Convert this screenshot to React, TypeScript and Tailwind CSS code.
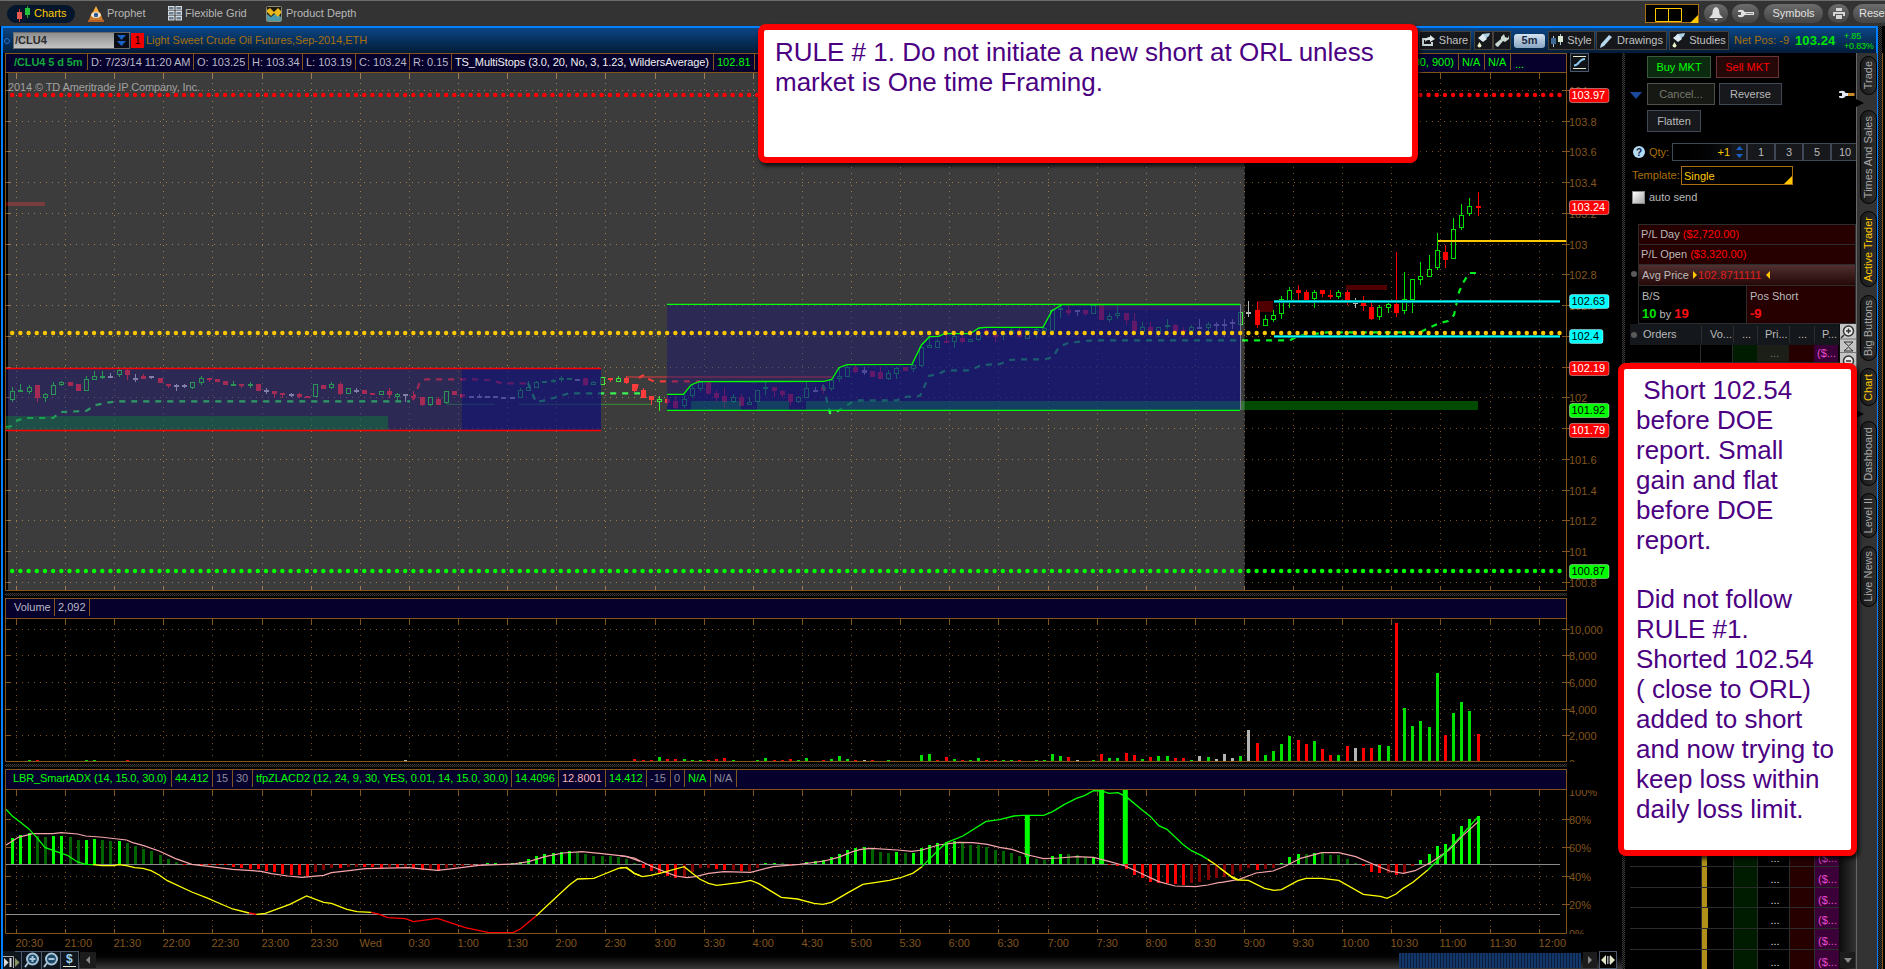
import type { ReactNode } from 'react';

type Seg = 'left' | 'mid' | 'right';

const BAR_STEP = 8.187;
const barX = (i: number) => 12.2 + BAR_STEP * i;
const gridX = Array.from({ length: 32 }, (_, k) => Math.floor(16.5 + k * 49.12) + 0.5);
const priceY = (p: number) => 90.5 + (104 - p) * 153.7;

// color, high, body top, body bottom, low
const CANDLES = `G387,391,400,402 G384,390,391,392 G385,387,392,394 R385,385,398,402 G393,394,398,402 G382,385,395,395
G381,382,385,386 R382,382,386,386 R384,384,391,391 G376,379,391,391 G371,376,380,380 G371,376,378,379 W373,376,378,378
G369,370,375,377 R369,370,375,380 W374,378,380,382 R374,376,379,379 W376,376,378,379 R378,378,383,383 R384,384,386,388
W384,385,387,391 W384,385,387,388 G382,382,388,389 G376,378,383,385 R378,378,380,382 R379,379,382,382 R381,381,385,385
G381,384,386,386 R384,384,386,388 G382,384,386,388 R384,384,391,391 W388,390,392,394 R391,391,394,398 R393,393,395,398
W393,394,396,397 R393,394,397,398 R396,396,398,398 G384,384,397,397 R385,385,389,389 G382,384,388,389 R382,384,394,395
G388,388,394,394 W388,390,392,393 R390,390,394,394 R393,393,395,395 G391,391,395,395 R388,391,395,398 G393,394,397,402
W394,394,396,402 R391,396,398,400 R397,397,405,406 G397,397,405,406 R397,399,405,405 G391,391,403,404 R391,391,395,395
R394,394,397,398 W396,396,398,398 W394,396,398,398 W396,396,398,398 W396,396,398,398 W397,397,399,399 W397,397,399,399
G388,390,398,398 G381,387,391,391 G381,382,388,388 G381,381,383,383 G379,380,382,383 G376,378,380,382 G378,378,380,380
W379,379,381,381 R378,378,385,386 G381,382,385,385 G377,377,385,385 R378,378,380,382 G376,378,382,382 R376,378,383,384
R384,384,391,392 R388,390,398,398 R396,396,400,405 G396,399,402,411 R395,399,403,406 R396,401,408,409 G395,399,406,408
G384,388,396,398 G381,382,389,391 R382,382,394,394 R390,393,398,402 R388,396,402,408 G394,397,402,403 R394,397,406,406
G397,402,405,405 G390,390,402,402 G382,387,389,395 R387,387,391,397 R390,391,395,398 R394,394,402,406 G396,397,402,403
G381,388,398,398 W387,390,392,392 R384,387,391,394 G379,380,389,391 G367,376,379,382 G365,367,377,377 R365,367,372,373
W367,370,373,375 R371,371,377,377 R367,372,379,379 G370,373,379,380 G367,368,374,379 R367,367,371,371 G364,365,369,372
G347,347,366,367 G337,345,348,348 G339,341,348,348 R334,341,343,343 G335,336,342,348 R334,338,342,343 G339,339,342,342
G332,333,340,341 R327,330,334,336 R330,334,337,342 G331,333,335,340 G328,330,334,335 R328,330,337,337 G330,330,339,339
G328,329,332,338 G327,328,331,331 G309,310,331,332 G305,308,310,318 R305,310,313,316 W310,310,312,316 R310,310,314,316
G305,305,314,314 R305,305,320,320 G313,316,320,322 G305,313,316,319 R313,313,320,325 R313,321,331,332 G322,327,332,335
R322,327,332,335 G327,327,332,337 G319,325,327,329 R324,325,332,332 R327,330,332,337 G325,327,331,332 W319,327,328,329
G322,324,328,332 W322,324,326,331 W319,324,326,337 W319,322,324,329 G312,312,325,329 W301,312,314,317 R302,310,325,328
G315,319,326,326 G310,315,320,322 G296,299,314,319 G287,290,302,308 R285,290,293,300 R290,292,300,300 G290,292,299,308
R290,290,294,297 R290,295,297,299 G290,292,297,299 R290,292,303,305 W298,302,304,308 R296,302,306,311 R302,307,319,320
G305,307,317,320 G302,304,308,313 R252,304,313,317 G272,299,311,314 G279,279,300,313 G262,276,280,285 G255,269,277,277
G233,250,268,270 R245,252,260,268 G218,229,259,259 G204,215,228,230 G198,206,214,216 R192,206,208,216`
  .split(/\s+/)
  .map((c) => ({ kind: c[0], v: c.slice(1).split(',').map(Number) }));

// bar index, color, height
const VOLUME = `2G1 3R1 9G1 10G1 14R1 48W1 76R2 77R1 78R1 79G4 80R2 81R2 82G2 83G1 84G1 85R1 86R2 87R3 88G1 91G1 92G3 93R1
94R1 95R2 96G1 97G3 99R1 100G2 101G5 102G2 103R1 104W1 105R1 107G1 111G6 112G7 113R1 114R4 115G2 116R1 117G1 118G3
119R1 120R1 121G1 122G1 123R1 125G1 126G1 127G7 128G5 129R4 130W1 132G1 133R7 134G3 135G3 136R8 137R6 138G2 139R4
140G5 141G5 142R3 143R3 144G1 145W5 146G4 147W2 148W7 149W3 150G5 151W31 152R18 153G6 154G10 155G17 156G25 157R21
158R17 159G20 160R12 161R6 162G6 163R15 164W13 165R13 166R13 167G16 168G15 169R138 170G53 171G35 172G40 173G34
174G88 175R26 176G48 177G59 178G50 179R27`
  .split(/\s+/)
  .map((s) => s.match(/(\d+)([GRW])(\d+)/)!.slice(1))
  .map(([i, c, h]) => ({ i: +i, c, h: +h }));

// B/G bright and dark green above the zero line, R/D bright and dark red below
const HISTOGRAM = `0B26 1B29 2B31 3G28 4G27 5B28 6B28 7G27 8G24 9B24 10B25 11G24 12G23 13B23 14G21 15G18 16G15 17G13 18G9
19G5 20G2 21R1 22D1 23R1 24R1 25R1 26R1 27R3 28R4 29R5 30R5 31R7 32R8 33R10 34R11 35R11 36R12 37D8 38D6 39D4 40R4
41D3 42D3 43R3 44R3 45R4 46D3 47R4 48D3 49R4 50R6 51D5 52R7 53D4 54D3 55D2 56D2 57D1 58B1 59B1 61B1 62B2 63B5 64B8
65B10 66B11 67B12 68B13 69G12 70G10 71G8 72G8 73G8 74G7 75G5 76G1 77R4 78R7 79R10 80R12 81R14 82D13 83D8 84D4 85D4
86R5 87R6 88D6 89R7 90D7 91D4 92B1 93B1 94G1 95R1 96R1 97B2 98B3 99B4 100B7 101B10 102B14 103B16 104B17 105G15
106G12 107G11 108B12 109G11 110B11 111B16 112B19 113B21 114B22 115B23 116G21 117G19 118G19 119G17 120G14 121G13
122G11 123G8 124B7 125G5 126G4 127B8 128B10 129G10 130G9 131G7 132B7 133B4 134R1 135R2 136R5 137R11 138R14 139R18
140R19 141R19 142R20 143R21 144D19 145D18 146D16 147D14 148D13 149D11 150D7 151D4 152R6 153D5 154D4 155B1 156B7
157B10 158G10 159B11 160G11 161G9 162G9 163G5 164G1 165R2 166R8 167R9 168D9 169R11 170D9 171D2 172B4 173B10 174B18
175B20 176B30 177B38 178B45 179B48`
  .split(/\s+/)
  .map((s) => s.match(/(\d+)([BGRD])(\d+)/)!.slice(1))
  .map(([i, c, h]) => ({ i: +i, c, h: +h }));

const CANDLE_COLORS: Record<string, string> = { G: '#00e000', R: '#ff0000', W: '#b4b4b4' };
const HIST_COLORS: Record<string, string> = { B: '#00ff00', G: '#006400', R: '#ff0000', D: '#820000' };

const ADX: [Seg, string, string][] = [
  ['left', '#00ff00', '15,748 30,768 50,787 70,806 90,832 110,862 130,871 165,886 190,906 210,913 228,914'],
  ['left', '#ffff00', '228,914 250,917 280,917 290,914 310,917 330,923 350,925 370,932 390,945 410,962 470,996 510,1015 530,1026 570,1047 610,1059'],
  ['left', '#ff0000', '610,1059 628,1063'],
  ['left', '#ffff00', '628,1063 650,1060 710,1033 751,1008 793,1027 812,1030 850,1048 875,1055 910,1057'],
  ['left', '#ff0000', '910,1057 930,1063 950,1073 993,1076 1013,1085 1072,1075 1140,1103 1195,1117 1257,1118 1275,1107 1314,1067'],
  ['left', '#ffff00', '1314,1067 1360,1015 1395,975 1415,957 1455,955 1475,945 1515,925 1535,922 1554,940 1568,947'],
  ['mid', '#ffff00', '0,383 15,383 35,400 55,410 75,406 97,400 157,380 195,417 217,430 237,436 297,427 320,421 340,431 395,472 435,477 475,490 497,493 518,487 560,457 595,433 640,425 660,421 685,414 717,400 740,380'],
  ['mid', '#00ff00', '740,380 780,330 800,308 840,288 897,244 930,239 965,228 985,226 1038,226 1060,215 1088,194 1118,175 1138,167 1160,152 1180,153 1198,160 1220,158 1240,170 1280,211 1300,230 1320,257 1340,268 1380,314 1400,332 1425,347 1440,358'],
  ['mid', '#ffff00', '1440,358 1460,374 1500,413 1515,421'],
  ['right', '#ffff00', '0,925 28,950 45,960 67,961 105,985 127,991 145,989 184,962 203,955 240,955 280,961 338,1003 378,1009 394,1015 415,1002 432,985 455,967 490,930'],
  ['right', '#00ff00', '490,930 530,880 570,825 609,770'],
];

const SIGNAL: [Seg, string][] = [
  ['left', '15,855 45,832 80,821 130,821 150,818 190,822 210,828 245,831 310,840 325,848 350,856 390,873 430,896 470,913 530,922 570,928 640,934 665,941 705,948 740,952 793,946 812,938 855,932 895,926 1000,923 1072,931 1110,926 1173,916 1257,912 1295,905 1335,890 1380,879 1425,875 1475,881 1535,889 1568,904'],
  ['mid', '0,347 35,354 75,378 115,398 137,408 165,413 185,410 217,400 255,395 320,397 375,380 440,373 500,363 535,352 570,335 590,328 615,325 680,330 715,334 740,330 780,315 830,307 865,308 900,313 930,322 960,328 1000,345 1038,356 1075,354 1118,350 1160,352 1198,364 1238,378 1280,402 1320,425 1360,438 1410,440 1440,435 1470,427'],
  ['right', '0,968 45,958 85,939 125,933 155,918 190,895 240,878 280,878 320,890 360,912 400,933 432,940 460,932 500,905 540,870 570,830 609,785'],
];

const SEG_TRANSFORM: Record<Seg, string> = {
  left: 'translate(0 560) scale(0.40816 0.33333)',
  mid: 'translate(620 740) scale(0.40816 0.33333)',
  right: 'translate(1220 560) scale(0.42411 0.33333)',
};

const TIMES = ['20:30', '21:00', '21:30', '22:00', '22:30', '23:00', '23:30', 'Wed', '0:30', '1:00', '1:30', '2:00', '2:30', '3:00', '3:30', '4:00', '4:30', '5:00', '5:30', '6:00', '6:30', '7:00', '7:30', '8:00', '8:30', '9:00', '9:30', '10:00', '10:30', '11:00', '11:30', '12:00'];

const PRICES = ['104', '103.8', '103.6', '103.4', '103.2', '103', '102.8', '102.6', '102.4', '102.2', '102', '101.8', '101.6', '101.4', '101.2', '101', '100.8'];

const TAGS = [
  { label: '103.97', y: 95.5, bg: '#ff0000', fg: '#fff' },
  { label: '103.24', y: 207.5, bg: '#ff0000', fg: '#fff' },
  { label: '102.63', y: 301.5, bg: '#00ffff', fg: '#000' },
  { label: '102.4', y: 336.5, bg: '#00ffff', fg: '#000' },
  { label: '102.19', y: 368.5, bg: '#ff0000', fg: '#fff' },
  { label: '101.92', y: 410.5, bg: '#00ff00', fg: '#000' },
  { label: '101.79', y: 430.5, bg: '#ff0000', fg: '#fff' },
  { label: '100.87', y: 571.5, bg: '#00ff00', fg: '#000' },
];

function Grid({ top, bottom, rows, ticks }: { top: number; bottom: number; rows: number[]; ticks: 'both' | 'top' }) {
  return (
    <g stroke="#82551d" shapeRendering="crispEdges">
      {gridX.map((x) => (
        <g key={x}>
          <line x1={x} x2={x} y1={top + 10} y2={bottom - 4} strokeDasharray="1 5" />
          <line x1={x} x2={x} y1={top} y2={top + 6} />
          {ticks === 'both' && <line x1={x} x2={x} y1={bottom - 4} y2={bottom} />}
        </g>
      ))}
      {rows.map((v) => {
        const y = Math.floor(v) + 0.5;
        return (
          <g key={v}>
            <line x1={10} x2={1556} y1={y} y2={y} strokeDasharray="1 5" />
            <line x1={6} x2={11} y1={y} y2={y} />
            <line x1={1562} x2={1570} y1={y} y2={y} />
          </g>
        );
      })}
    </g>
  );
}

function AxisText({ y, children }: { y: number; children: ReactNode }) {
  return (
    <text x={1569} y={y + 4.5} fill="#82551d">
      {children}
    </text>
  );
}

function DotLine({ y, color }: { y: number; color: string }) {
  return (
    <g fill={color}>
      {Array.from({ length: 190 }, (_, i) => (
        <circle key={i} cx={barX(i)} cy={y} r={2.2} />
      ))}
    </g>
  );
}

function PricePlot() {
  const stop = { fill: 'none', strokeWidth: 2.2, strokeDasharray: '6 6' };
  return (
    <svg width="1619" height="518" viewBox="3 73 1619 518" className="block shrink-0 text-[11px]">
      <Grid top={73} bottom={590} rows={PRICES.map((p) => priceY(+p))} ticks="both" />

      <rect x="6" y="202" width="39" height="4" fill="#500000" />
      <rect x="626" y="376" width="206" height="2" fill="#700000" />
      <rect x="1101" y="305" width="139" height="5" fill="#500000" />
      <rect x="1257" y="301" width="16" height="11" fill="#500000" />
      <rect x="1346" y="285" width="41" height="5" fill="#500000" />
      <path d="M447 404.3H495M519 404.3H651" stroke="#007000" />
      <rect x="1240" y="401" width="238" height="9" fill="#004b00" />

      {CANDLES.map(({ kind, v }, i) => {
        const x = Math.round(barX(i));
        const color = CANDLE_COLORS[kind];
        const [high, top, bottom, low] = v;
        return (
          <g key={i}>
            <path d={`M${x + 0.5} ${high}V${top}M${x + 0.5} ${bottom}V${low}`} stroke={color} />
            {kind === 'G' && bottom - top > 2 ? (
              <rect x={x - 1.5} y={top + 0.5} width={4} height={bottom - top - 1} fill="none" stroke={color} />
            ) : (
              <rect x={x - 2} y={top} width={5} height={Math.max(2, bottom - top)} fill={color} />
            )}
          </g>
        );
      })}

      <g {...stop} stroke="#00f020">
        <path d="M6 427L12 426L18 420L28 418H53L61 412L86 411L96 405L108 402.5L118 401.3H410" />
        <path d="M528 383L536 402L547 400L569 393.3H640" />
        <path d="M823 385L830 413L836 412L846 406L855 400.3H897L904 397L920 396L925 385L929 376L938 374L946 370.3H970L982 365L1000 364L1010 360L1018 359.3H1045L1053 357L1059 347L1068 343L1085 341L1095 340.3H1290L1298 336L1327 332.3H1420L1433 326L1440 323L1448 321L1454 315L1459 292L1463 283L1469 273H1478" />
      </g>
      <path {...stop} stroke="#f00000" d="M413 400L420 382L426 379.3H473L490 380L502 383.3H528M636 390L640 377L644 375L648 379L654 381.3H700" />

      <rect x="8" y="73" width="1236.6" height="517" fill="#fff" opacity="0.235" />

      <rect x="6" y="368" width="595" height="62" fill="#120c7e" opacity="0.38" />
      <rect x="462" y="368" width="139" height="62" fill="#040484" opacity="0.4" />
      <rect x="6" y="416" width="382" height="14" fill="#00aa28" opacity="0.3" />
      <path d="M6 368.4H601M6 430.4H601" stroke="#ff0000" strokeWidth="1.5" />

      <rect x="667" y="304" width="573" height="106" fill="#120c7e" opacity="0.38" />
      <path d="M667 394.3H683.5L691 385L699 381.7L824 381.3L832 379.3L839 367.7L847 364.7L912 364.3L921.5 345L929.5 336.7L938.5 336.3L944.5 333.7H970L979 328L986 327.3H1043L1052 310.7L1062 304.7H1240V410H667Z" fill="#040484" opacity="0.42" />
      <path d="M667 394.3H683.5L691 385L699 381.7L824 381.3L832 379.3L839 367.7L847 364.7L912 364.3L921.5 345L929.5 336.7L938.5 336.3L944.5 333.7H970L979 328L986 327.3H1043L1052 310.7L1062 304.7H1240" fill="none" stroke="#00ff00" strokeWidth="1.3" />
      <path d="M691 401H741V410H691ZM757 401H789V410H757ZM806 401H1240V410H806Z" fill="#00aa50" opacity="0.25" />
      <path d="M667 304.4H1240M667 410.4H1240" stroke="#00ff00" strokeWidth="1.2" />
      <path d="M1240.5 304V410" stroke="#7b7b9b" />

      <DotLine y={95} color="#ff0000" />
      <path d="M1274 301.4H1560M1274 336.4H1560" stroke="#008b90" strokeWidth="3" />
      <path d="M1274 301.4H1560M1274 336.4H1560" stroke="#00ffff" strokeWidth="1.3" />
      <DotLine y={333} color="#ffc800" />
      <path d="M1438 241H1566" stroke="#ffc800" strokeWidth="2" />
      <DotLine y={571} color="#00ff00" />

      <path d="M5.5 73V590.5H1566.5V73" fill="none" stroke="#82551d" />
      <text x="8" y="90.500" fill="#a0a0a0" textLength="192">2014 © TD Ameritrade IP Company, Inc.</text>
      {PRICES.map((p) => (
        <AxisText key={p} y={priceY(+p)}>{p}</AxisText>
      ))}
      {TAGS.map((t) => (
        <g key={t.label}>
          <rect x="1569.5" y={t.y - 7} width={t.label.length > 5 ? 39.5 : 33.5} height="14" rx="2.5" fill={t.bg} stroke="#fff" strokeOpacity="0.4" />
          <text x="1571.5" y={t.y + 3.5} fill={t.fg}>{t.label}</text>
        </g>
      ))}
    </svg>
  );
}

function VolumePlot() {
  const rows = [629.5, 655.5, 682.5, 709.5, 735.5];
  return (
    <svg width="1619" height="143" viewBox="3 619 1619 143" className="block shrink-0 text-[11px]">
      <Grid top={619} bottom={761} rows={rows} ticks="top" />
      {VOLUME.map(({ i, c, h }) => (
        <rect key={i} x={Math.round(barX(i)) - 1} y={761 - h} width="3" height={h} fill={CANDLE_COLORS[c]} />
      ))}
      <path d="M5.5 619V761.5H1566.5V619" fill="none" stroke="#82551d" />
      {['10,000', '8,000', '6,000', '4,000', '2,000'].map((label, k) => (
        <AxisText key={label} y={rows[k]}>{label}</AxisText>
      ))}
      <AxisText y={763}>0</AxisText>
    </svg>
  );
}

function IndicatorPlot() {
  const rows = [819.5, 847.5, 876.5, 904.5];
  return (
    <svg width="1619" height="144" viewBox="3 790 1619 144" className="block shrink-0 text-[11px]">
      <Grid top={790} bottom={933} rows={rows} ticks="both" />
      <path d="M6 864.5H1560M6 914.5H1560" stroke="#8c8c8c" />
      {HISTOGRAM.map(({ i, c, h }) => (
        <rect key={i} x={Math.round(barX(i)) - 1} y={c === 'B' || c === 'G' ? 864 - h : 864} width="3" height={h} fill={HIST_COLORS[c]} />
      ))}
      <path d="M1027.3 815V857M1101.6 790V864M1125.3 790V864" stroke="#00ff00" strokeWidth="5" />
      {SIGNAL.map(([seg, points]) => (
        <g key={seg} transform={SEG_TRANSFORM[seg]}>
          <polyline points={points} fill="none" stroke="#f5a5aa" strokeWidth="1.2" vectorEffect="non-scaling-stroke" />
        </g>
      ))}
      {ADX.map(([seg, color, points]) => (
        <g key={points} transform={SEG_TRANSFORM[seg]}>
          <polyline points={points} fill="none" stroke={color} strokeWidth="1.3" vectorEffect="non-scaling-stroke" />
        </g>
      ))}
      <path d="M5.5 790V933.5H1566.5V790" fill="none" stroke="#82551d" />
      <AxisText y={791.5}>100%</AxisText>
      {['80%', '60%', '40%', '20%'].map((label, k) => (
        <AxisText key={label} y={rows[k]}>{label}</AxisText>
      ))}
      <AxisText y={933.5}>0%</AxisText>
    </svg>
  );
}

function Cell({ w, color = 'text-[#b9b9c4]', children }: { w: string; color?: string; children: ReactNode }) {
  return (
    <div className={`flex shrink-0 items-center overflow-hidden whitespace-nowrap border-r border-[#82551d] pl-[3px] ${w} ${color}`}>
      {children}
    </div>
  );
}

function PaneHeader({ children, h = 'h-[21px] pb-[2px]' }: { children: ReactNode; h?: string }) {
  return (
    <div className={`ml-[2px] flex w-[1562px] shrink-0 border border-[#82551d] bg-[#06002d] ${h}`}>{children}</div>
  );
}

const HATCH = 'bg-[repeating-conic-gradient(#3a3a3a_0_25%,#0a0a0a_0_50%)] bg-[length:2px_2px]';

function Wrench({ className }: { className?: string }) {
  return (
    <svg width="16" height="9" viewBox="0 0 16 9" className={className}>
      <path d="M0 1.500C3 0 6 1 6.500 3H9v3H6.500C6 8 3 9 0 7.500V6h3V3H0Z" fill="#dfe6f2" />
      <path d="M9 3h6.5v3H9Z" fill="#c98a2c" />
    </svg>
  );
}

function TopBar() {
  return (
    <div className="flex h-[26px] shrink-0 items-center border-t border-[#6b6e6e] bg-[#333] text-[11px] text-[#b8b8b8]">
      <div className="ml-[7px] flex h-[18px] w-[68px] items-center rounded-full bg-[#04162c] text-[#ffc800]">
        <svg width="16" height="16" viewBox="0 0 16 16" className="ml-[9px]">
          <path d="M3.5 3v13" stroke="#c33" />
          <path d="M1 6h5v7H1Z" fill="#e45a50" />
          <path d="M11.5 0v12" stroke="#2a2" />
          <path d="M9 2h5v7H9Z" fill="#23c33c" />
        </svg>
        <span className="ml-[2px]">Charts</span>
      </div>
      <svg width="16" height="16" viewBox="0 0 16 16" className="ml-[13px]">
        <path d="M8 0l3 6H5Z" fill="#ffb13c" />
        <path d="M4 6h8l3 8H1Z" fill="#c97a26" />
        <ellipse cx="8" cy="9" rx="5" ry="3" fill="#f2ead8" />
        <circle cx="8" cy="9" r="2.2" fill="#2d5a94" />
        <path d="M0 14h16v2H0Z" fill="#b5602a" />
      </svg>
      <span className="ml-[3px] w-[61px]">Prophet</span>
      <svg width="14" height="15" viewBox="0 0 14 15">
        {[0.5, 5.5, 10.5].map((y) => (
          <g key={y} fill="#6b7d8c" stroke="#d5dde2">
            <rect x="0.5" y={y} width="5.5" height="3.5" />
            <rect x="8" y={y} width="5.5" height="3.5" />
          </g>
        ))}
      </svg>
      <span className="ml-[3px] w-[81px]">Flexible Grid</span>
      <svg width="16" height="16" viewBox="0 0 16 16">
        <rect x="0.5" y="0.5" width="15" height="15" rx="1" fill="#1d1a10" stroke="#8c8c78" />
        <path d="M1 8l4 3 5-4 5 4v4H1Z" fill="#4c99a8" />
        <path d="M1 4l3-2 4 4 4-4 3 3v2l-3 4-4-4-3 3-4-4Z" fill="#e8b81e" />
      </svg>
      <span className="ml-[4px]">Product Depth</span>

      <div className="ml-auto flex items-center text-[#e0e0e0]">
        <svg width="54" height="20" viewBox="0 0 54 20">
          <rect x="0.5" y="0.5" width="53" height="18" fill="#000" stroke="#a87010" />
          <path d="M10.500 4.500h26v13h-26ZM23.500 4.500v13" fill="none" stroke="#ffc800" />
          <path d="M53 11v8h-8Z" fill="#ffc800" />
        </svg>
        <div className="ml-[5px] flex h-[19px] w-[24px] items-center justify-center rounded-full bg-gradient-to-b from-[#6c6c6c] to-[#444]">
          <svg width="14" height="14" viewBox="0 0 14 14">
            <path d="M7 0c3 1 3.500 4 3.500 7L14 11H0l3.500-4C3.500 4 4 1 7 0ZM5 12h4l-2 2Z" fill="#e0e0e0" />
          </svg>
        </div>
        <div className="ml-[4px] flex h-[19px] w-[27px] items-center justify-center rounded-full bg-gradient-to-b from-[#6c6c6c] to-[#444]">
          <svg width="16" height="9" viewBox="0 0 16 9">
            <path d="M0 1.500C3 0 6 1 6.500 3H16v3H6.500C6 8 3 9 0 7.500V6h3V3H0Z" fill="#e0e0e0" />
            <path d="M8 4.500h7" stroke="#888" />
          </svg>
        </div>
        <div className="ml-[5px] flex h-[19px] w-[59px] items-center justify-center rounded-full bg-gradient-to-b from-[#6c6c6c] to-[#444]">Symbols</div>
        <div className="ml-[5px] flex h-[19px] w-[21px] items-center justify-center rounded-full bg-gradient-to-b from-[#6c6c6c] to-[#444]">
          <svg width="12" height="11" viewBox="0 0 12 11">
            <path d="M3 0h6v3H3ZM0 4h12v4h-2V6H2v2H0ZM3 7h6v4H3Z" fill="#d5d5d5" />
          </svg>
        </div>
        <div className="ml-[4px] flex h-[19px] w-[32px] items-center overflow-hidden rounded-l-full bg-gradient-to-b from-[#6c6c6c] to-[#444] pl-[6px]">Reset</div>
      </div>
    </div>
  );
}

function ToolButton({ w, children }: { w: string; children: ReactNode }) {
  return (
    <div className={`flex h-[19px] shrink-0 items-center justify-center gap-[4px] border border-[#45413a] bg-[#15171a] text-[11px] text-[#c0c0c0] ${w}`}>
      {children}
    </div>
  );
}

function Flask() {
  return (
    <svg width="13" height="15" viewBox="0 0 13 15" className="shrink-0">
      <path d="M5 1l8-1-1 3-5 4-3-3Z" fill="#a9cfe2" />
      <path d="M1 5l5-4 4 5-4 3Z" fill="#dceaf2" />
      <path d="M2.500 9l2 3.500a2 2 0 1 1-4 0Z" fill="#e8f0c8" />
    </svg>
  );
}

function SymbolBar() {
  return (
    <div className="flex h-[25px] shrink-0 items-center bg-gradient-to-b from-[#0c4685] to-[#031c38]">
      <div className="ml-[1px] h-[6px] w-[6px] rounded-full border border-[#1f6fd0]" />
      <div className="ml-[3px] flex h-[17px] w-[117px] items-center border border-[#6a6a6a] bg-gradient-to-b from-[#8d8d8d] to-[#c4c4c4] pl-[1px] text-[11px] font-bold text-[#2b2b2b]">
        /CLU4
        <div className="ml-auto flex h-full w-[15px] items-center justify-center bg-[#0a0d14]">
          <svg width="9" height="11" viewBox="0 0 9 11">
            <path d="M0 0h9L4.500 5ZM0 6h9l-4.500 5Z" fill="#1c62c4" />
          </svg>
        </div>
      </div>
      <div className="ml-[1px] flex h-[15px] w-[13px] items-center justify-center bg-[#f00000] text-[11px] text-black">1</div>
      <span className="ml-[2px] w-[218px] whitespace-nowrap text-[11px] tracking-[-0.050px] text-[#a8700c]">Light Sweet Crude Oil Futures,Sep-2014,ETH</span>

      <div className="ml-auto flex items-center">
        <ToolButton w="w-[52px]">
          <svg width="13" height="11" viewBox="0 0 13 11">
            <path d="M0 3h5v2H2v4h7V7h2v4H0Z" fill="#c9d6d6" />
            <path d="M3 7c0-4 3-5 5-5V0l5 4-5 3V5C6 5 4 5 3 7Z" fill="#dfe8e8" />
          </svg>
          Share
        </ToolButton>
        <div className="w-[3px]" />
        <ToolButton w="w-[19px]"><Flask /></ToolButton>
        <ToolButton w="w-[18px]">
          <svg width="14" height="14" viewBox="0 0 14 14">
            <path d="M9 0l1 3 3 1 1-3v4l-4 3-2-1-5 6-2-1-1-2 6-5V3Z" fill="#c8d8d0" />
          </svg>
        </ToolButton>
        <div className="ml-[3px] flex h-[14px] w-[31px] items-center justify-center rounded-[3px] bg-gradient-to-b from-[#d5e3f0] to-[#88a5c4] text-[11px] font-bold text-[#1b2b40]">5m</div>
        <div className="w-[3px]" />
        <ToolButton w="w-[47px]">
          <svg width="12" height="13" viewBox="0 0 12 13" className="shrink-0">
            <path d="M2.500 2v11M9.500 0v11" stroke="#b8c8d8" />
            <path d="M0 4h5v6H0Z" fill="#3c6a94" />
            <path d="M7 2h5v6H7Z" fill="#d8e8d0" />
          </svg>
          Style
        </ToolButton>
        <div className="w-[1px]" />
        <ToolButton w="w-[71px]">
          <svg width="13" height="14" viewBox="0 0 13 14">
            <path d="M0 14l1-4 8-9 3 2-8 9Z" fill="#b8d8ee" />
          </svg>
          Drawings
        </ToolButton>
        <div className="w-[2px]" />
        <ToolButton w="w-[60px]"><Flask />Studies</ToolButton>
        <span className="ml-[5px] w-[61px] whitespace-nowrap text-[11px] text-[#a8700c]">Net Pos: -9</span>
        <span className="w-[49px] text-[13px] font-bold tracking-[0.100px] text-[#00e400]">103.24</span>
        <div className="w-[32px] whitespace-nowrap text-[9px] leading-[10px] tracking-[-0.200px] text-[#00e400]">
          <div>+.85</div>
          <div>+0.83%</div>
        </div>
      </div>
    </div>
  );
}

function BottomBar() {
  return (
    <div className="flex h-[18px] shrink-0 items-center bg-gradient-to-b from-black to-[#3a3a3a]">
      <svg width="76" height="18" viewBox="3 951 76 18" className="shrink-0">
        <path d="M0 951H79V969H0Z" fill="#10161e" />
        <path d="M21.500 951V969M41.500 951V969M60.500 951V969M78.500 951V969M15 951.500H79" stroke="#4a5a6c" />
        <path d="M3 956.500H13.500V968" fill="none" stroke="#b0b0b0" />
        <path d="M4 958l4.500 4.500L4 967Z" fill="#d8d8d8" />
        <path d="M10.500 958v9" stroke="#d8d8d8" strokeWidth="2" />
        <path d="M15 958l4.500 4.500-4.500 4.500Z" fill="#8a9460" />
        <g stroke="#a8c4d8" strokeWidth="2">
          <circle cx="32.500" cy="959" r="5.500" fill="#1d4a68" />
          <circle cx="51.500" cy="959" r="5.500" fill="#1d4a68" />
          <path d="M28 963l-3 4M47 963l-3 4M29.500 959h6M32.500 956v6M48.500 959h6" />
        </g>
        <text x="66" y="963" fontSize="12" fontWeight="bold" fill="#9fd4f0">$</text>
        <path d="M63 966.500h13" stroke="#e0e8d0" />
      </svg>
      <div className="ml-[1px] flex h-[16px] w-[16px] items-center justify-center bg-[#1c1c1c]">
        <div className="h-0 w-0 border-y-4 border-r-4 border-y-transparent border-r-[#888]" />
      </div>
      <div className="ml-auto h-[15px] w-[182px] bg-[repeating-linear-gradient(90deg,#14376a_0_2px,#0a1d3c_2px_3px)]" />
      <div className="ml-[2px] flex h-[16px] w-[14px] items-center justify-center bg-[#1c1c1c]">
        <div className="h-0 w-0 border-y-4 border-l-4 border-y-transparent border-l-[#888]" />
      </div>
      <div className="ml-[2px] mr-[5px] flex h-[18px] w-[18px] items-center justify-center border border-[#4a5a6c] bg-black">
        <svg width="14" height="10" viewBox="0 0 14 10">
          <path d="M0 5l5-5v10ZM14 5L9 0v10Z" fill="#e4e4c8" />
          <path d="M6.500 1v8M8 1v8" stroke="#aaa" />
        </svg>
      </div>
    </div>
  );
}

function ChartColumn() {
  return (
    <div className="flex w-[1619px] shrink-0 flex-col">
      <div className="flex">
        <PaneHeader h="h-[20px] pb-[2px]">
          <Cell w="w-[82px] pl-[8px] tracking-[-0.100px]" color="text-[#12a83a] font-bold">/CLU4 5 d 5m</Cell>
          <Cell w="w-[106px]">D: 7/23/14 11:20 AM</Cell>
          <Cell w="w-[55px]">O: 103.25</Cell>
          <Cell w="w-[54px]">H: 103.34</Cell>
          <Cell w="w-[53px]">L: 103.19</Cell>
          <Cell w="w-[54px]">C: 103.24</Cell>
          <Cell w="w-[42px]">R: 0.15</Cell>
          <Cell w="w-[262px]" color="text-[#f0f0f0] tracking-[-0.1px]">TS_MultiStops (3.0, 20, No, 3, 1.23, WildersAverage)</Cell>
          <Cell w="w-[41px]" color="text-[#00ff00]">102.81</Cell>
          <Cell w="w-[704px] justify-end pr-[4px]" color="text-[#00ff00]">900, 900)</Cell>
          <Cell w="w-[26px]" color="text-[#00ff00]">N/A</Cell>
          <Cell w="w-[26px]" color="text-[#00ff00]">N/A</Cell>
          <span className="pl-[4px] pt-[2px] text-[#00ff00]">...</span>
        </PaneHeader>
        <svg width="19" height="19" viewBox="0 0 19 19" className="ml-[3px]">
          <rect x="0.5" y="0.5" width="18" height="18" fill="#101418" stroke="#4a5a6c" />
          <path d="M3 3.500h13M3 15.500h13" stroke="#e8e8d0" />
          <path d="M4 12.500c6 0 4-6.500 11-6.500" fill="none" stroke="#8cc8f0" strokeWidth="2" />
        </svg>
      </div>
      <PricePlot />
      <div className={`mb-[2px] ml-[2px] mt-[2px] h-[3px] w-[1562px] shrink-0 ${HATCH}`} />
      <PaneHeader>
        <Cell w="w-[49px] pl-[8px]">Volume</Cell>
        <Cell w="w-[35px]">2,092</Cell>
      </PaneHeader>
      <VolumePlot />
      <div className={`mb-[2px] ml-[2px] mt-[2px] h-[3px] w-[1562px] shrink-0 ${HATCH}`} />
      <PaneHeader>
        <Cell w="w-[166px] pl-[7px] tracking-[-0.120px]" color="text-[#00ff00]">LBR_SmartADX (14, 15.0, 30.0)</Cell>
        <Cell w="w-[41px]" color="text-[#00ff00]">44.412</Cell>
        <Cell w="w-[20px]" color="text-[#8c8c9a]">15</Cell>
        <Cell w="w-[20px]" color="text-[#8c8c9a]">30</Cell>
        <Cell w="w-[259px] pl-[2px] tracking-[-0.050px]" color="text-[#00ff00]">tfpZLACD2 (12, 24, 9, 30, YES, 0.01, 14, 15.0, 30.0)</Cell>
        <Cell w="w-[47px]" color="text-[#00ff00]">14.4096</Cell>
        <Cell w="w-[47px]" color="text-[#f5b5ba]">12.8001</Cell>
        <Cell w="w-[41px]" color="text-[#00ff00]">14.412</Cell>
        <Cell w="w-[24px]" color="text-[#8c8c9a]">-15</Cell>
        <Cell w="w-[14px]" color="text-[#8c8c9a]">0</Cell>
        <Cell w="w-[26px]" color="text-[#00ff00]">N/A</Cell>
        <Cell w="w-[26px]" color="text-[#8c8c9a]">N/A</Cell>
      </PaneHeader>
      <IndicatorPlot />
      <svg width="1619" height="17" viewBox="3 934 1619 17" className="block shrink-0 text-[11px]">
        {TIMES.map((t, k) => (
          <text key={t} x={gridX[k] - 1} y={947} fill="#82551d">{t}</text>
        ))}
      </svg>
      <BottomBar />
    </div>
  );
}

function OrderButton({ className, children }: { className: string; children: ReactNode }) {
  return <div className={`flex h-[22px] items-center justify-center border ${className}`}>{children}</div>;
}

const GREY_BTN = 'border-[#3f4854] bg-[#16181b] text-[#b9b9b9]';

function LadderRow({ wide }: { wide?: boolean }) {
  return (
    <div className="flex h-[20.870px] shrink-0 items-stretch border-b border-[#2c2c2c] pl-[1px]">
      <div className="w-[71px] border-r border-[#2c2c2c]" />
      <div className="w-[32px] border-r border-[#2c2c2c]">
        <div className={`h-full bg-[#b09018] ${wide ? 'w-[6px]' : 'w-[5px]'}`} />
      </div>
      <div className="w-[24px] border-r border-[#2c2c2c] bg-[#001c00]" />
      <div className="w-[32px] border-r border-[#2c2c2c] pl-[3px] pt-[4px] text-center text-[#ddd]">...</div>
      <div className="w-[25px] border-r border-[#2c2c2c] bg-[#260000]" />
      <div className="w-[24px] bg-[#3c0038] pl-[3px] pt-[4px] text-[#e84cd0]">($...</div>
    </div>
  );
}

function OrderPanel() {
  return (
    <div className="flex w-[227px] shrink-0 flex-col overflow-hidden text-[11px] text-[#b9b9b9]">
      <div className="flex h-[88px] shrink-0 pl-[1px] pt-[3px]">
        <svg width="12" height="7" viewBox="0 0 12 7" className="mt-[36px]">
          <path d="M0 0h12L6 7Z" fill="#1b4a9c" />
        </svg>
        <div className="ml-[5px] flex flex-col gap-[5px]">
          <div className="flex gap-[5px]">
            <OrderButton className="w-[64px] border-[#3c5a3c] bg-[#0c2a10] text-[#00ff00]">Buy MKT</OrderButton>
            <OrderButton className="w-[63px] border-[#6a3434] bg-[#260808] text-[#ff0000]">Sell MKT</OrderButton>
          </div>
          <div className="flex gap-[4px]">
            <OrderButton className="w-[68px] border-[#4c5048] bg-[#161814] text-[#77796f]">Cancel...</OrderButton>
            <OrderButton className={`w-[63px] ${GREY_BTN}`}>Reverse</OrderButton>
          </div>
          <OrderButton className={`w-[54px] ${GREY_BTN}`}>Flatten</OrderButton>
        </div>
        <Wrench className="ml-auto mr-[1px] mt-[34px]" />
      </div>
      <div className="mt-[2px] flex h-[18px] shrink-0 items-center pl-[4px]">
        <div className="flex h-[12px] w-[12px] shrink-0 items-center justify-center rounded-full bg-[#b5dcf5] text-[10px] font-bold text-[#124]">?</div>
        <span className="ml-[4px] w-[23px] shrink-0 text-[#a8700c]">Qty:</span>
        <div className="flex h-[18px] w-[75px] shrink-0 items-center justify-end border border-[#3f4854] bg-gradient-to-r from-black to-[#1a1d20] text-[#ffc800]">
          +1
          <svg width="14" height="16" viewBox="0 0 14 16" className="ml-[2px]">
            <path d="M0 0h14v16H0Z" fill="#15181c" />
            <path d="M4 6h7L7.500 2ZM4 10h7l-3.500 4Z" fill="#1c62c4" />
          </svg>
        </div>
        {['1', '3', '5', '10'].map((n) => (
          <div key={n} className={`flex h-[18px] w-[28px] shrink-0 items-center justify-center border ${GREY_BTN}`}>{n}</div>
        ))}
      </div>
      <div className="mt-[5px] flex h-[19px] shrink-0 items-center pl-[3px]">
        <span className="w-[49px] text-[#a8700c]">Template:</span>
        <div className="flex h-[19px] w-[112px] items-center border border-[#a8700c] pl-[2px] pt-px text-[#ffc800]">
          Single
          <svg width="8" height="8" viewBox="0 0 8 8" className="ml-auto self-end">
            <path d="M8 0v8H0Z" fill="#ffc800" />
          </svg>
        </div>
      </div>
      <div className="mt-[6px] flex h-[13px] shrink-0 items-center gap-[4px] pl-[3px]">
        <div className="h-[13px] w-[13px] border border-[#888] bg-gradient-to-br from-white to-[#a8a8a8]" />
        auto send
      </div>
      <div className="relative ml-[9px] mt-[20px] flex h-[100px] shrink-0 flex-col border border-[#2c2c2c]">
        <div className="absolute left-[-8px] top-[46px] h-[6px] w-[6px] rounded-full bg-[#5a5a5a]" />
        <div className="flex h-[20px] items-center border-b border-[#2c2c2c] bg-[#260000] pl-[2px]">P/L Day&nbsp;<span className="text-[#ff0000]">($2,720.00)</span></div>
        <div className="flex h-[20px] items-center border-b border-[#2c2c2c] bg-[#260000] pl-[2px]">P/L Open&nbsp;<span className="text-[#ff0000]">($3,320.00)</span></div>
        <div className="flex h-[20px] items-center bg-gradient-to-b from-[#503030] to-[#260808] pl-[3px]">
          Avg Price
          <div className="ml-[4px] h-0 w-0 border-y-4 border-l-4 border-y-transparent border-l-[#ffc800]" />
          <span className="ml-[1px] tracking-[0.250px] text-[#e02020]">102.8711111</span>
          <div className="ml-[4px] h-0 w-0 border-y-4 border-r-4 border-y-transparent border-r-[#ffc800]" />
        </div>
        <div className="flex flex-1 border-t border-[#2c2c2c]">
          <div className="w-[108px] border-r border-[#2c2c2c] pl-[3px] pt-[2px]">
            B/S
            <div className="leading-[18px]"><b className="text-[13px] text-[#00e000]">10</b> by <b className="text-[13px] text-[#ff1010]">19</b></div>
          </div>
          <div className="flex-1 bg-[#260000] pl-[3px] pt-[2px]">
            Pos Short
            <div className="leading-[18px]"><b className="text-[13px] text-[#ff1010]">-9</b></div>
          </div>
        </div>
      </div>
      <div className="flex min-h-0 flex-1">
        <div className="flex w-[210px] flex-col overflow-hidden pl-[1px]">
          <div className="flex h-[21px] shrink-0 items-center bg-[#14181c]">
            <div className="ml-[1px] h-[6px] w-[6px] rounded-full bg-[#5a5a5a]" />
            <span className="ml-[6px] w-[58px]">Orders</span>
            <span className="w-[32px] border-l border-[#2c2c2c] pl-[8px]">Vo...</span>
            <span className="w-[24px] border-l border-[#2c2c2c] pl-[8px]">...</span>
            <span className="w-[32px] border-l border-[#2c2c2c] pl-[7px]">Pri...</span>
            <span className="w-[25px] border-l border-[#2c2c2c] pl-[8px]">...</span>
            <span className="w-[24px] border-l border-[#2c2c2c] pl-[7px]">P...</span>
          </div>
          <div className="flex h-[18px] shrink-0 items-stretch border-b border-[#2c2c2c]">
            <div className="w-[71px] border-r border-[#2c2c2c]" />
            <div className="w-[32px] border-r border-[#2c2c2c]" />
            <div className="w-[24px] bg-[#001c00]" />
            <div className="w-[32px] bg-[#1c1e18] pl-[3px] text-center text-[#77796f]">...</div>
            <div className="w-[25px] bg-[#260000]" />
            <div className="w-[24px] bg-[#3c0038] pl-[3px] text-[#e84cd0]">($...</div>
          </div>
          <div className="-mb-[2px] flex flex-1 flex-col justify-end overflow-hidden">
            {Array.from({ length: 6 }, (_, i) => (
              <LadderRow key={i} wide={i === 3} />
            ))}
          </div>
        </div>
        <div className="flex flex-1 flex-col items-center bg-gradient-to-r from-[#0c0c0c] to-[#333]">
          <svg width="16" height="54" viewBox="0 0 16 54">
            <path d="M0 0h16v54H0Z" fill="#c4c4c4" />
            <path d="M0 15h16M0 28.500h16" stroke="#777" />
            <g fill="none" stroke="#333" strokeWidth="1.500">
              <circle cx="8.500" cy="7" r="5" fill="#e8e8e8" />
              <circle cx="8.500" cy="37" r="5" fill="#e8e8e8" />
              <path d="M6 7h5M8.500 4.500v5M4 11l-3 3M6 37h5" />
              <path d="M4 18h9l-4.500 4ZM4 27h9l-4.500-4Z" strokeWidth="1" />
            </g>
          </svg>
          <div className="mt-auto mb-[1px] flex h-[16px] w-[15px] items-center justify-center bg-[#1c1c1c]">
            <div className="h-0 w-0 border-x-4 border-t-[5px] border-x-transparent border-t-[#888]" />
          </div>
        </div>
      </div>
    </div>
  );
}

const TABS = [
  { label: 'Trade', size: 'h-[39px] mt-[3px]' },
  { label: 'Times And Sales', size: 'h-[94px] mt-[15px]' },
  { label: 'Active Trader', size: 'h-[76px] mt-[7px]', active: true },
  { label: 'Big Buttons', size: 'h-[66px] mt-[8px]' },
  { label: 'Chart', size: 'h-[38px] mt-[7px]', active: true },
  { label: 'Dashboard', size: 'h-[65px] mt-[15px]' },
  { label: 'Level II', size: 'h-[45px] mt-[7px]' },
  { label: 'Live News', size: 'h-[61px] mt-[8px]' },
];

function GadgetTabs() {
  return (
    <div className="relative flex w-[21px] shrink-0 flex-col items-end border-l border-[#666] bg-[#333]">
      {TABS.map((t) => (
        <div
          key={t.label}
          className={`flex w-[17px] shrink-0 items-center justify-center rounded-full border border-black bg-gradient-to-r from-[#1a1a1a] to-[#2e2e2e] text-[11px] ${t.size} ${t.active ? 'text-[#ffc800]' : 'text-[#a8a8a8]'}`}
        >
          <span className="rotate-180 whitespace-nowrap [writing-mode:vertical-rl]">{t.label}</span>
        </div>
      ))}
      <div className="absolute left-[-1px] top-[46px] h-0 w-0 border-y-4 border-l-8 border-y-transparent border-l-black" />
      <div className="absolute left-[-1px] top-[357px] h-0 w-0 border-y-4 border-l-8 border-y-transparent border-l-black" />
    </div>
  );
}

export default function App() {
  return (
    <div className="relative flex h-[969px] w-[1885px] flex-col overflow-hidden bg-black font-['Liberation_Sans',Arial,sans-serif] text-[11px]">
      <TopBar />
      <div className="flex min-h-0 flex-1 pl-[1px]">
        <div className="flex w-[1877px] shrink-0 flex-col border-x-2 border-t-2 border-[#0080ff]">
          <SymbolBar />
          <div className="flex min-h-0 flex-1">
            <ChartColumn />
            <div className={`mr-[4px] w-[3px] shrink-0 ${HATCH}`} />
            <OrderPanel />
            <GadgetTabs />
          </div>
        </div>
        <div className={`w-[4px] ${HATCH}`} />
        <div className="mt-[27px] w-[3px] border-l border-[#82551d] bg-black" />
      </div>

      <div className="absolute left-[758px] top-[24px] h-[139px] w-[660px] whitespace-pre rounded-[8px] border-[6px] border-[#ff0000] bg-white pl-[11px] pt-[7px] text-[26px] leading-[30px] text-[#4b0082] shadow-[2px_3px_4px_rgba(0,0,0,0.8)]">
        {'RULE # 1. Do not initiate a new short at ORL unless\nmarket is One time Framing.'}
      </div>
      <div className="absolute left-[1618px] top-[363px] h-[493px] w-[239px] whitespace-pre rounded-[8px] border-[6px] border-[#ff0000] bg-white pl-[12px] pt-[7px] text-[26px] leading-[29.900px] text-[#4b0082] shadow-[2px_3px_4px_rgba(0,0,0,0.8)]">
        {' Short 102.54\nbefore DOE\nreport. Small\ngain and flat\nbefore DOE\nreport.\n\nDid not follow\nRULE #1.\nShorted 102.54\n( close to ORL)\nadded to short\nand now trying to\nkeep loss within\ndaily loss limit.'}
      </div>
    </div>
  );
}
